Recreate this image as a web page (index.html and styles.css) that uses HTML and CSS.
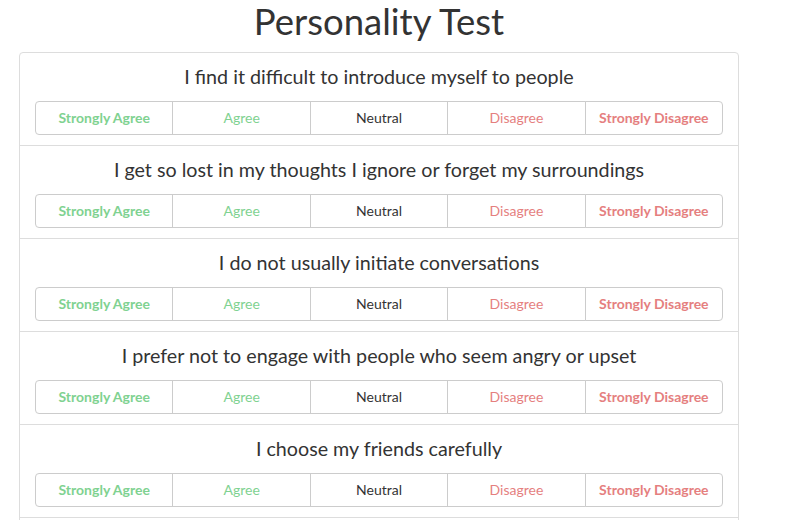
FILE: index.html
```html
<!DOCTYPE html>
<html lang="en">
<head>
<meta charset="utf-8">
<title>Personality Test</title>
<link rel="stylesheet" href="styles.css">
</head>
<body>
<div class="page">
  <h1 class="title">Personality Test</h1>
  <div class="panel">
    <div class="item">
      <p class="question">I find it difficult to introduce myself to people</p>
      <div class="choices">
        <button class="choice sa">Strongly Agree</button><button class="choice a">Agree</button><button class="choice n">Neutral</button><button class="choice d">Disagree</button><button class="choice sd">Strongly Disagree</button>
      </div>
    </div>
    <div class="item">
      <p class="question">I get so lost in my thoughts I ignore or forget my surroundings</p>
      <div class="choices">
        <button class="choice sa">Strongly Agree</button><button class="choice a">Agree</button><button class="choice n">Neutral</button><button class="choice d">Disagree</button><button class="choice sd">Strongly Disagree</button>
      </div>
    </div>
    <div class="item">
      <p class="question">I do not usually initiate conversations</p>
      <div class="choices">
        <button class="choice sa">Strongly Agree</button><button class="choice a">Agree</button><button class="choice n">Neutral</button><button class="choice d">Disagree</button><button class="choice sd">Strongly Disagree</button>
      </div>
    </div>
    <div class="item">
      <p class="question">I prefer not to engage with people who seem angry or upset</p>
      <div class="choices">
        <button class="choice sa">Strongly Agree</button><button class="choice a">Agree</button><button class="choice n">Neutral</button><button class="choice d">Disagree</button><button class="choice sd">Strongly Disagree</button>
      </div>
    </div>
    <div class="item">
      <p class="question">I choose my friends carefully</p>
      <div class="choices">
        <button class="choice sa">Strongly Agree</button><button class="choice a">Agree</button><button class="choice n">Neutral</button><button class="choice d">Disagree</button><button class="choice sd">Strongly Disagree</button>
      </div>
    </div>
    <div class="item">
      <p class="question">I often feel drained after social events</p>
      <div class="choices">
        <button class="choice sa">Strongly Agree</button><button class="choice a">Agree</button><button class="choice n">Neutral</button><button class="choice d">Disagree</button><button class="choice sd">Strongly Disagree</button>
      </div>
    </div>
  </div>
</div>
</body>
</html>
```

FILE: styles.css
```css
* { box-sizing: border-box; }
html, body { margin: 0; padding: 0; background: #fff; }
body {
  font-family: Lato, "Open Sans", sans-serif;
  color: #333;
  font-size: 14px;
}
.page {
  width: 720px;
  margin-left: 19px;
}
.title {
  margin: 0 0 10px;
  font-size: 36.5px;
  line-height: 42px;
  font-weight: 400;
  text-align: center;
  color: #333;
}
.panel {
  border: 1px solid #ddd;
  border-radius: 4px;
}
.item {
  padding: 12px 15px 10px;
  border-top: 1px solid #ddd;
}
.item:first-child { border-top: none; }
.question {
  margin: 0 0 12px;
  font-size: 19.7px;
  line-height: 24px;
  text-align: center;
  color: #333;
}
.choices {
  display: flex;
}
.choice {
  flex: 1 1 0;
  height: 34px;
  margin: 0 0 0 -1px;
  padding: 6px 12px;
  font-family: Lato, "Open Sans", sans-serif;
  font-size: 14px;
  line-height: 20px;
  background: #fff;
  border: 1px solid #ccc;
  border-radius: 0;
  cursor: pointer;
}
.choice:first-child { margin-left: 0; border-radius: 4px 0 0 4px; }
.choice:last-child { border-radius: 0 4px 4px 0; }
.sa { color: #7fd291; font-weight: 700; }
.a { color: #7fd291; }
.n { color: #333; }
.d { color: #e57f7f; }
.sd { color: #e57f7f; font-weight: 700; }
```
